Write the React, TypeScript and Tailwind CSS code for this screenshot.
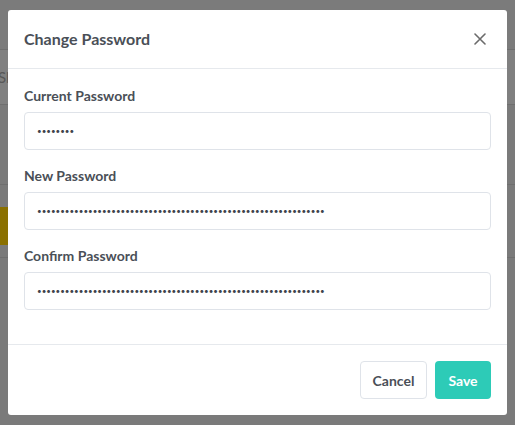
import React from 'react';

const Field = ({ label, value }: { label: string; value: string }) => (
  <div className="mb-4">
    <label className="block mb-1.5 text-[14px] leading-5 font-bold text-[#4a4f57]">{label}</label>
    <input
      type="password"
      readOnly
      value={value}
      className="w-full h-[38px] px-3 rounded border border-[#dfe3e9] bg-white text-[8px] text-[#3f444c] outline-none"
    />
  </div>
);

export default function App() {
  return (
    <div className="relative w-full h-[425px] overflow-hidden bg-[#7a7a7a]" style={{ fontFamily: 'Lato, "Noto Sans", sans-serif' }}>
      {/* page under the overlay */}
      <div className="h-[50px] bg-[#7b7b7b] border-b border-[#6f6f6f]" />
      <div className="h-[55px] bg-[#808080] border-b border-[#6f6f6f] flex items-center">
        <span className="text-[15px] text-[#585858] -ml-[2px]">Sl</span>
      </div>
      <div className="h-[80px] bg-[#7a7a7a] border-b border-[#6f6f6f]" />
      <div className="h-[73px] bg-[#7a7a7a] border-b border-[#6f6f6f] pt-[22px]">
        <div className="h-[38px] w-[40px] bg-[#8a7000]" />
      </div>

      {/* overlay + modal */}
      <div className="absolute inset-0 pl-[8px] pt-[10px]">
        <div className="w-[499px] h-[405px] bg-white rounded-[3px] flex flex-col">
          <div className="h-[59px] px-4 flex items-center justify-between border-b border-[#e6e9ed]">
            <h2 className="text-[16px] font-bold text-[#4a4f57]">Change Password</h2>
            <button className="text-[#6b6b6b] mr-[5px]">
              <svg width="12" height="12" viewBox="0 0 12 12" fill="none" stroke="currentColor" strokeWidth="1.6" strokeLinecap="round">
                <path d="M1 1L11 11M11 1L1 11" />
              </svg>
            </button>
          </div>
          <div className="px-4 pt-[17px] pb-[18px] border-b border-[#e6e9ed]">
            <Field label="Current Password" value="12345678" />
            <Field label="New Password" value={'x'.repeat(62)} />
            <Field label="Confirm Password" value={'x'.repeat(62)} />
          </div>
          <div className="flex justify-end gap-2 px-4 pt-4">
            <button className="h-[38px] w-[67px] rounded border border-[#dfe3e9] bg-white text-[14px] font-bold text-[#4a4f57]">Cancel</button>
            <button className="h-[38px] w-[56px] rounded bg-[#2dcbb7] text-[14px] font-bold text-white">Save</button>
          </div>
        </div>
      </div>
    </div>
  );
}
